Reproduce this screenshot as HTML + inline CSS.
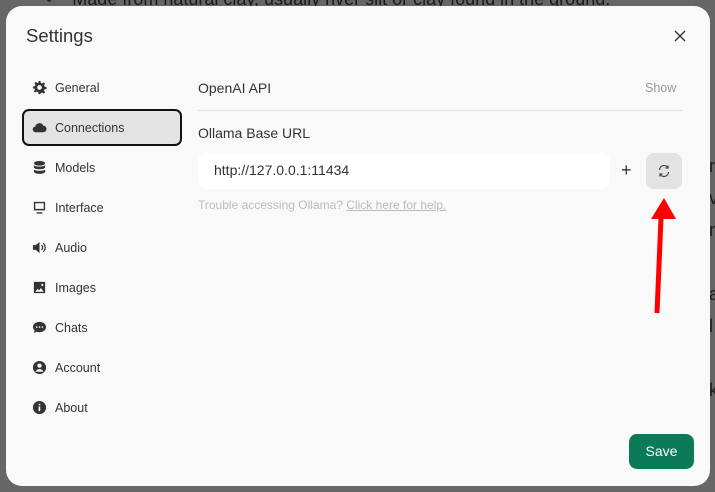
<!DOCTYPE html>
<html><head><style>
*{margin:0;padding:0;box-sizing:border-box}
body{width:715px;height:492px;background:#666;font-family:"Liberation Sans",sans-serif;position:relative;overflow:hidden}
.bg{position:absolute;color:#1a1a1a;font-size:18px}
.modal{position:absolute;left:6px;top:6px;width:704px;height:480px;background:#f9f9f9;border-radius:16px}
.a{position:absolute}
.item{position:absolute;left:22px;width:160px;height:37px;display:flex;align-items:center;padding-left:10px;font-size:12.5px;color:#333}
.item svg{width:15px;height:15px;margin-right:8px;fill:#333}
.sel{background:#e3e3e3;border:2px solid #111;border-radius:7px;padding-left:8px}
</style></head><body>
<div class="bg" style="left:46px;top:-11px">•&nbsp;&nbsp;&nbsp;&nbsp;Made from natural clay, usually river silt or clay found in the ground.</div>
<div class="bg" style="left:709px;top:150px;line-height:32px">r<br>v<br>n<br><br>a<br>l<br><br>k</div>
<div class="modal"></div>
<div class="a" style="left:26px;top:25px;font-size:18.5px;color:#333">Settings</div>
<svg class="a" style="left:674px;top:30px" width="12" height="12" viewBox="0 0 12 12"><path d="M1 1L11 11M11 1L1 11" stroke="#333" stroke-width="1.3"/></svg>

<div class="item" style="top:69px"><svg viewBox="0 0 16 16"><path d="M7 1h2l.4 2 1.5.7 1.7-1.2 1.4 1.4-1.2 1.7.7 1.5 2 .4v2l-2 .4-.7 1.5 1.2 1.7-1.4 1.4-1.7-1.2-1.5.7L9 15H7l-.4-2-1.5-.7-1.7 1.2-1.4-1.4 1.2-1.7L2.5 9 1 9V7l2-.4.7-1.5-1.2-1.7 1.4-1.4 1.7 1.2L6.6 3zM8 5.5a2.5 2.5 0 100 5 2.5 2.5 0 000-5z"/></svg>General</div>
<div class="item sel" style="top:109px"><svg viewBox="0 0 16 16"><path d="M4 13a3 3 0 01-.5-6A4.5 4.5 0 0112 6a3.5 3.5 0 010 7z"/></svg>Connections</div>
<div class="item" style="top:149px"><svg viewBox="0 0 16 16"><ellipse cx="8" cy="3.5" rx="6" ry="2.5"/><path d="M2 5.5c1 2 11 2 12 0V8c-1 2.5-11 2.5-12 0zM2 10c1 2 11 2 12 0v2.5c-1 3-11 3-12 0z"/></svg>Models</div>
<div class="item" style="top:189px"><svg viewBox="0 0 16 16"><path d="M2 2h12v9H2zM3.5 3.5v6h9v-6zM5 13h6v1.5H5z"/></svg>Interface</div>
<div class="item" style="top:229px"><svg viewBox="0 0 16 16"><path d="M1 5.5h3L8 2v12L4 10.5H1z"/><path d="M10 5.5a3 3 0 010 5M12 3.5a6 6 0 010 9" stroke="#333" stroke-width="1.3" fill="none"/></svg>Audio</div>
<div class="item" style="top:269px"><svg viewBox="0 0 16 16"><path d="M2 2h12v12H2zM3.5 12.5h9l-3-4-2 2.5-1.5-1.5zM11 4a1.2 1.2 0 100 2.4A1.2 1.2 0 0011 4z" fill-rule="evenodd"/></svg>Images</div>
<div class="item" style="top:309px"><svg viewBox="0 0 16 16"><path d="M8 2c4 0 7 2.5 7 5.5S12 13 8 13c-1 0-2-.2-3-.5L2 14l.8-3C1.7 10 1 8.8 1 7.5 1 4.5 4 2 8 2z"/><circle cx="5" cy="7.5" r=".9" fill="#f9f9f9"/><circle cx="8" cy="7.5" r=".9" fill="#f9f9f9"/><circle cx="11" cy="7.5" r=".9" fill="#f9f9f9"/></svg>Chats</div>
<div class="item" style="top:349px"><svg viewBox="0 0 16 16"><circle cx="8" cy="8" r="7"/><circle cx="8" cy="6" r="2.3" fill="#f9f9f9"/><path d="M3.8 12.5c1-2 2.5-2.8 4.2-2.8s3.2.8 4.2 2.8" fill="#f9f9f9"/></svg>Account</div>
<div class="item" style="top:389px"><svg viewBox="0 0 16 16"><circle cx="8" cy="8" r="7"/><circle cx="8" cy="4.8" r="1" fill="#f9f9f9"/><path d="M7 7h1.8v5H7z" fill="#f9f9f9"/></svg>About</div>

<div class="a" style="left:198px;top:80px;font-size:14px;color:#333">OpenAI API</div>
<div class="a" style="left:645px;top:81px;font-size:12.5px;color:#999">Show</div>
<div class="a" style="left:198px;top:110px;width:485px;height:1px;background:#e3e3e3"></div>
<div class="a" style="left:198px;top:125px;font-size:14px;color:#333">Ollama Base URL</div>
<div class="a" style="left:198px;top:153px;width:412px;height:36px;background:#fff;border-radius:9px;padding:9px 16px;font-size:14px;color:#333">http://127.0.0.1:11434</div>
<div class="a" style="left:621px;top:160px;font-size:18px;color:#333">+</div>
<div class="a" style="left:646px;top:153px;width:36px;height:36px;background:#e3e3e3;border-radius:8px"></div>
<svg class="a" style="left:657px;top:164px" width="14" height="14" viewBox="0 0 14 14" fill="none" stroke="#444" stroke-width="1.2"><path d="M2.5 6A4.5 4.5 0 0111 4M11.5 8A4.5 4.5 0 013 10M11 1.5V4H8.5M3 12.5V10h2.5"/></svg>
<div class="a" style="left:198px;top:198px;font-size:12px;color:#bbb">Trouble accessing Ollama? <u>Click here for help.</u></div>

<svg class="a" style="left:0;top:0" width="715" height="492"><path d="M657 313L661 218" stroke="#f00" stroke-width="5"/><path d="M664 198L676 219L651 219z" fill="#f00"/></svg>

<div class="a" style="left:629px;top:434px;width:65px;height:35px;background:#0b7a57;border-radius:8px;color:#fff;font-size:14px;text-align:center;line-height:35px">Save</div>
</body></html>
